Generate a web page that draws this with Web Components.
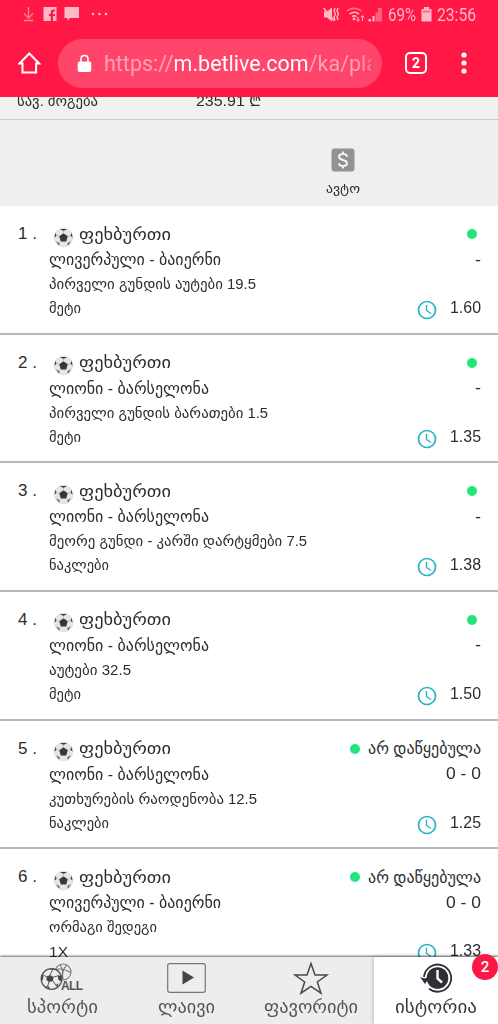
<!DOCTYPE html>
<html lang="ka">
<head>
<meta charset="utf-8">
<meta name="viewport" content="width=device-width, initial-scale=1">
<title>ისტორია</title>
<style>
    html, body { margin: 0; height: 100%; }
    body {
        font-family: "Liberation Sans", "DejaVu Sans", sans-serif;
        color: #2d2d2d;
        background: #fff;
        overflow: hidden;
    }
</style>
</head>
<body>
<bet-app></bet-app>

<script>
// one line of text drawn at a set width
class FitText extends HTMLElement {
    constructor() {
        super();
        this.attachShadow({ mode: 'open' });
    }

    connectedCallback() {
        const width = parseFloat(this.getAttribute('width'));
        this.shadowRoot.innerHTML = `
            <style>
                :host { display: inline-block; width: ${width}px; white-space: nowrap; text-align: left; }
                span { display: inline-block; transform-origin: 0 50%; }
            </style>
            <span><slot></slot></span>
        `;
        const span = this.shadowRoot.querySelector('span');
        const natural = span.getBoundingClientRect().width;
        if (natural) span.style.transform = `scaleX(${width / natural})`;
    }
}

class StatusBar extends HTMLElement {
    constructor() {
        super();
        this.attachShadow({ mode: 'open' });
    }

    connectedCallback() {
        this.shadowRoot.innerHTML = `
            <style>
                :host {
                    display: flex;
                    justify-content: space-between;
                    height: 30px;
                    padding: 0 22px 0 22px;
                    font: 18px/30px Roboto, sans-serif;
                    color: #ffb9c6;
                }
                div { display: flex; align-items: center; }
                svg { display: block; fill: currentColor; }
                .pct { margin: 0 5px 0 5px; }
                .time { margin-left: 5px; }
            </style>
            <div>
                <svg width="90" height="30" viewBox="0 0 90 30">
                    <path d="M6.500 7v11M2 13.500l4.500 4.500 4.500-4.500M2 20.500h9" fill="none" stroke="#ff7f97" stroke-width="1.300"/>
                    <path fill-rule="evenodd" d="M21.500 7h13v14H31v-5h2v-2h-2v-1.500q0-1 1-1h1V9.500h-2q-2.300 0-2.300 2.500v2H27v2h1.700v5h-7.200z"/>
                    <path d="M42.500 7h14.500v11H48l-2.500 3v-3h-3z"/>
                    <circle cx="71" cy="14" r="1.300"/><circle cx="77.500" cy="14" r="1.300"/><circle cx="84" cy="14" r="1.300"/>
                </svg>
            </div>
            <div>
                <svg width="61" height="30" viewBox="322 0 61 30">
                    <path d="M324 11.500h3l5-4v14l-5-4h-3z"/>
                    <path d="M323.500 8l11 13" stroke="currentColor" stroke-width="1.500"/>
                    <path d="M335 8l-1 3 1.500 3-1.500 3 1 3M338 8l-1 3 1.500 3-1.500 3 1 3" fill="none" stroke="currentColor" stroke-width="1.400"/>
                    <g fill="none" stroke="currentColor" stroke-width="1.500">
                        <path d="M347 11q7-5.500 14.500 0" opacity=".6"/><path d="M349.500 14q5-3.500 9.500 0M352 16.700q2.300-1.700 4.500 0"/>
                    </g>
                    <circle cx="354" cy="19" r="1.400"/>
                    <path d="M358 17v4M356.500 19.500l1.500 2 1.500-2M362.500 21v-5M361 17.500l1.500-2 1.500 2" fill="none" stroke="currentColor"/>
                    <path d="M368.500 19h2.500v2.500h-2.500zM372.500 16h2v5.500h-2z"/>
                    <path d="M375.500 12.500h2.500v9h-2.500zM378 8h4v13.500h-4z" opacity=".45"/>
                </svg>
                <fit-text class="pct" width="28">69%</fit-text>
                <svg width="11" height="30" viewBox="0 0 11 30">
                    <path d="M3 7h5v2h2.500v12.500H.5V9H3z"/><path d="M2 10.500h7v2H2z" fill="#ff6681"/>
                </svg>
                <fit-text class="time" width="39">23:56</fit-text>
            </div>
        `;
    }
}

class AddressBar extends HTMLElement {
    constructor() {
        super();
        this.attachShadow({ mode: 'open' });
    }

    connectedCallback() {
        this.shadowRoot.innerHTML = `
            <style>
                :host {
                    display: flex;
                    align-items: center;
                    height: 67px;
                    box-sizing: border-box;
                    padding: 0 0 1px 18px;
                    color: #fff;
                }
                svg { display: block; flex: none; }
                .url {
                    display: flex;
                    align-items: center;
                    width: 324px;
                    height: 49px;
                    margin-left: 17px;
                    box-sizing: border-box;
                    padding-left: 19px;
                    border-radius: 25px;
                    background: #ff456a;
                }
                .text {
                    width: 267px;
                    margin-left: 12px;
                    overflow: hidden;
                    padding-top: 2px;
                    font: 22px/30px Roboto, sans-serif;
                    -webkit-mask-image: linear-gradient(to right, #000 95%, rgba(0,0,0,.6));
                }
                .dim { color: #ffa2b4; }
                .tabs {
                    width: 22px;
                    height: 22px;
                    margin-left: 23px;
                    box-sizing: border-box;
                    border: 2px solid #fff;
                    border-radius: 5px;
                    font: bold 14px/18px Roboto, sans-serif;
                    text-align: center;
                }
                .menu { margin-left: 33px; }
            </style>
            <svg width="23" height="24" viewBox="0 0 23 24">
                <path d="M1.500 12.500L11.300 2.500l9.800 10h-3v9H4.500v-9z" fill="none" stroke="#fff" stroke-width="2"/>
            </svg>
            <div class="url">
                <svg width="15" height="19" viewBox="0 0 15 19">
                    <path d="M2.500 7.500h10q1.800 0 1.800 1.700v7q0 1.800-1.800 1.800h-10q-1.800 0-1.800-1.800v-7q0-1.700 1.800-1.700z" fill="#fff"/>
                    <path d="M4 8V5q0-3.500 3.500-3.500T11 5v3" fill="none" stroke="#fff" stroke-width="1.600"/>
                </svg>
                <div class="text"><fit-text width="274"><span class="dim">https://</span>m.betlive.com<span class="dim">/ka/pla</span></fit-text></div>
            </div>
            <div class="tabs">2</div>
            <svg class="menu" width="8" height="22" viewBox="0 0 8 22" fill="#fff">
                <circle cx="4" cy="3" r="2.600"/><circle cx="4" cy="11" r="2.600"/><circle cx="4" cy="19" r="2.600"/>
            </svg>
        `;
    }
}

class BetSummary extends HTMLElement {
    constructor() {
        super();
        this.attachShadow({ mode: 'open' });
    }

    connectedCallback() {
        this.shadowRoot.innerHTML = `
            <style>
                :host { display: block; background: #efefef; height: 109px; }
                .win {
                    display: grid;
                    grid-template-columns: 179px 1fr;
                    height: 22px;
                    padding-left: 17px;
                    border-bottom: 1px solid #c9c9c9;
                    font-size: 15px;
                    line-height: 8px;
                    background: #f1f1f0;
                }
                .auto {
                    display: flex;
                    flex-direction: column;
                    align-items: center;
                    width: 60px;
                    margin-left: 312.500px;
                    padding-top: 28px;
                    font-size: 13px;
                }
                svg { display: block; }
                .auto fit-text { margin-top: 8px; line-height: 18px; }
            </style>
            <div class="win">
                <div><fit-text width="81">სავ. მოგება</fit-text></div>
                <div><fit-text width="66">235.91 ₾</fit-text></div>
            </div>
            <div class="auto">
                <svg width="24" height="24" viewBox="0 0 24 24">
                    <rect x=".5" y=".5" width="23" height="23" rx="3" fill="#929292"/>
                    <path d="M16 8.800Q16 6 12 6T8 8.800q0 2.200 4 3.100t4 3.200q0 2.900-4 2.900t-4-2.800M12 3.500V6M12 18v2.500" fill="none" stroke="#f4f4f4" stroke-width="2"/>
                </svg>
                <fit-text width="34">ავტო</fit-text>
            </div>
        `;
    }
}

class BetRow extends HTMLElement {
    constructor() {
        super();
        this.attachShadow({ mode: 'open' });
    }

    connectedCallback() {
        const data = {
            num: this.getAttribute('num'),
            teams: this.getAttribute('teams').split('|'),
            market: this.getAttribute('market').split('|'),
            pick: this.getAttribute('pick').split('|'),
            status: this.getAttribute('status'),
            score: this.getAttribute('score').split('|'),
            odds: this.getAttribute('odds'),
        };

        const statusHTML = data.status ? `<fit-text width="113">${data.status}</fit-text>` : '';

        this.shadowRoot.innerHTML = `
            <style>
                :host {
                    display: grid;
                    grid-template-columns: 31px 1fr auto;
                    height: 128.640px;
                    box-sizing: border-box;
                    padding: 15px 17px 0 18px;
                    border-bottom: 2px solid #b7b6c3;
                    font-size: 16px;
                    background: #fff;
                }
                .num { font-size: 17px; line-height: 26px; }
                .body, .side { display: grid; grid-template-rows: 26px 25px 24px 24px; align-items: center; }
                .body { justify-items: start; }
                .side { justify-items: end; }
                .title { display: flex; align-items: center; gap: 5px; padding-left: 4px; }
                .title svg { margin-top: 6px; }
                .caps { font-size: 17px; }
                .market, .pick { font-size: 15px; }
                svg { display: block; }
                .status, .odds { display: flex; align-items: center; }
                .status { gap: 8px; }
                .dot { width: 10px; height: 10px; border-radius: 50%; background: #23e57b; }
                .status.bare .dot { margin-right: 4px; }
                .odds { grid-row: 4; gap: 13px; }
                .odds svg { margin-top: 4px; }
            </style>
            <div class="num">${data.num} .</div>
            <div class="body">
                <div class="title">
                    <svg width="21" height="21" viewBox="0 0 21 21">
                        <circle cx="10.500" cy="10.500" r="9.300" fill="#e6e6ea" stroke="#dcdce0" stroke-width=".8"/>
                        <path d="M10.500 6.200l4.300 3.100-1.600 5.100H7.800L6.200 9.300zM7 1.900h7l-3.500 2zM18.200 5.500l1.500 5-2.200-1.500zM2.800 5.500l-1.500 5L3.500 9zM3.200 14l3.300 2.500-.3 2.300zM17.800 14l-3.300 2.500.3 2.300z" fill="#363840"/>
                        <path d="M10.500 3.500v3M14.800 9.300l3-1M13.200 14.400l1.700 2.500M7.800 14.400l-1.700 2.500M6.200 9.300l-3-1" stroke="#b4b5bb" stroke-width=".7"/>
                    </svg>
                    <fit-text class="caps" width="92">ფეხბურთი</fit-text>
                </div>
                <fit-text width="${data.teams[1]}">${data.teams[0]}</fit-text>
                <fit-text class="market" width="${data.market[1]}">${data.market[0]}</fit-text>
                <fit-text class="pick" width="${data.pick[1]}">${data.pick[0]}</fit-text>
            </div>
            <div class="side">
                <div class="status ${data.status ? '' : 'bare'}"><span class="dot"></span>${statusHTML}</div>
                <fit-text width="${data.score[1]}">${data.score[0]}</fit-text>
                <div class="odds">
                    <svg width="20" height="20" viewBox="0 0 20 20" fill="none" stroke="#25b4c6">
                        <circle cx="10" cy="10" r="8.500" stroke-width="1.700"/>
                        <path d="M9.500 5v5.500l4.500 3" stroke-width="1.400"/>
                    </svg>
                    <fit-text width="31">${data.odds}</fit-text>
                </div>
            </div>
        `;
    }
}

class NavItem extends HTMLElement {
    constructor() {
        super();
        this.attachShadow({ mode: 'open' });
    }

    connectedCallback() {
        const badge = this.getAttribute('badge');
        this.shadowRoot.innerHTML = `
            <style>
                :host {
                    position: relative;
                    display: flex;
                    flex-direction: column;
                    align-items: center;
                    background: #ededed;
                    color: #555;
                    font-size: 18px;
                }
                :host([active]) { background: #fff; color: #3a3a40; box-shadow: -1px 0 4px rgba(0,0,0,.2); }
                .icon { height: 38px; padding-top: 2px; display: flex; align-items: center; }
                fit-text { line-height: 20px; }
                .badge {
                    position: absolute;
                    top: -3px;
                    right: 0;
                    width: 26px;
                    height: 26px;
                    border-radius: 50%;
                    background: #fb1847;
                    color: #fff;
                    font: 500 15px/27px Roboto, sans-serif;
                    text-align: center;
                }
            </style>
            <div class="icon"><slot></slot></div>
            <fit-text width="${this.getAttribute('width')}">${this.getAttribute('label')}</fit-text>
            ${badge ? `<div class="badge">${badge}</div>` : ''}
        `;
    }
}

class BottomNav extends HTMLElement {
    constructor() {
        super();
        this.attachShadow({ mode: 'open' });
    }

    connectedCallback() {
        this.shadowRoot.innerHTML = `
            <style>
                :host {
                    position: relative;
                    display: grid;
                    grid-template-columns: repeat(4, 1fr);
                    height: 67px;
                    box-shadow: 0 -1px 2px rgba(0,0,0,.6);
                }
                svg { display: block; }
                text { font: bold 12px "Liberation Sans", sans-serif; }
            </style>
            <nav-item label="სპორტი" width="71">
                <svg width="44" height="32" viewBox="0 0 44 32">
                    <g fill="none" stroke="#777" stroke-width="1.100">
                        <circle cx="23" cy="10" r="8"/>
                        <path d="M15.500 7.500q7-2 15 3M20 2.500q4 6 2 15M27 3q-6 5-4 14.500"/>
                    </g>
                    <circle cx="11.500" cy="17" r="10.300" fill="#ededed" stroke="#555" stroke-width="1.300"/>
                    <path d="M6.500 14.500l3.500-1.500 3.500 2-.5 4-4 1-2.500-2zM9 7l4 1 3.500-.5-4-.8zM17.500 13l3.500 1v5l-2.500-1zM1.500 13.500l2-1-.5 5-1.500 1zM5 24l4 .5 1 2.500zM15.500 23.500l3-2.500-1 4z" fill="#444"/>
                    <path d="M12.500 8L10 13M13.500 15l4-1M13 19l3 4.500M9 20l-1.500 4.500M6.500 14.500l-3-1" stroke="#555" fill="none"/>
                    <text x="21" y="28" fill="#555" textLength="22">ALL</text>
                </svg>
            </nav-item>
            <nav-item label="ლაივი" width="57">
                <svg width="39" height="30" viewBox="0 0 39 30">
                    <rect x=".7" y=".7" width="37.600" height="28.600" rx="2" fill="none" stroke="#777" stroke-width="1.200"/>
                    <path d="M15.500 7.500v14L27 14.500z" fill="#444"/>
                </svg>
            </nav-item>
            <nav-item label="ფავორიტი" width="94">
                <svg width="36" height="34" viewBox="0 0 36 34">
                    <path d="M18 2.500l4 11.500h12L24.300 21l3.700 11.200L18 25.300 8 32.200 11.700 21 2 14h12z" fill="none" stroke="#4a4a4a" stroke-width="1.500"/>
                </svg>
            </nav-item>
            <nav-item label="ისტორია" width="82" active badge="2">
                <svg width="32" height="32" viewBox="0 0 32 32">
                    <circle cx="17.500" cy="16" r="10.800" fill="#2e2f37"/>
                    <path d="M4 15A13.600 13.600 0 1 1 9 26.700" fill="none" stroke="#2e2f37" stroke-width="1.800"/>
                    <path d="M0 15l4.500 1.500L9.500 15l-4.500 7z" fill="#2e2f37"/>
                    <path d="M17.500 8v8.500l4.500 4" fill="none" stroke="#fff" stroke-width="2.400"/>
                </svg>
            </nav-item>
        `;
    }
}

// text and drawn width of each line
const bets = [
    { teams: 'ლივერპული - ბაიერნი|172', market: 'პირველი გუნდის აუტები 19.5|207', pick: 'მეტი|32', score: '-|6', odds: '1.60' },
    { teams: 'ლიონი - ბარსელონა|160', market: 'პირველი გუნდის ბარათები 1.5|219', pick: 'მეტი|32', score: '-|6', odds: '1.35' },
    { teams: 'ლიონი - ბარსელონა|160', market: 'მეორე გუნდი - კარში დარტყმები 7.5|258', pick: 'ნაკლები|60', score: '-|6', odds: '1.38' },
    { teams: 'ლიონი - ბარსელონა|160', market: 'აუტები 32.5|82', pick: 'მეტი|32', score: '-|6', odds: '1.50' },
    { teams: 'ლიონი - ბარსელონა|160', market: 'კუთხურების რაოდენობა 12.5|208', pick: 'ნაკლები|60', status: 'არ დაწყებულა', score: '0 - 0|35', odds: '1.25' },
    { teams: 'ლივერპული - ბაიერნი|172', market: 'ორმაგი შედეგი|108', pick: '1X|19', status: 'არ დაწყებულა', score: '0 - 0|35', odds: '1.33' },
];

class BetApp extends HTMLElement {
    constructor() {
        super();
        this.attachShadow({ mode: 'open' });
    }

    connectedCallback() {
        this.shadowRoot.innerHTML = `
            <style>
                :host { display: flex; flex-direction: column; height: 100vh; overflow: hidden; }
                header { flex: none; background: #ff1846; }
                main { flex: 1; min-height: 0; overflow: hidden; }
                bottom-nav { flex: none; }
            </style>
            <header>
                <status-bar></status-bar>
                <address-bar></address-bar>
            </header>
            <main><bet-summary></bet-summary></main>
            <bottom-nav></bottom-nav>
        `;
        const main = this.shadowRoot.querySelector('main');
        bets.forEach((b, i) => {
            const row = document.createElement('bet-row');
            row.setAttribute('num', i + 1);
            row.setAttribute('teams', b.teams);
            row.setAttribute('market', b.market);
            row.setAttribute('pick', b.pick);
            if (b.status) row.setAttribute('status', b.status);
            row.setAttribute('score', b.score);
            row.setAttribute('odds', b.odds);
            main.appendChild(row);
        });
    }
}

customElements.define('fit-text', FitText);
customElements.define('status-bar', StatusBar);
customElements.define('address-bar', AddressBar);
customElements.define('bet-summary', BetSummary);
customElements.define('bet-row', BetRow);
customElements.define('nav-item', NavItem);
customElements.define('bottom-nav', BottomNav);
customElements.define('bet-app', BetApp);
</script>
</body>
</html>
